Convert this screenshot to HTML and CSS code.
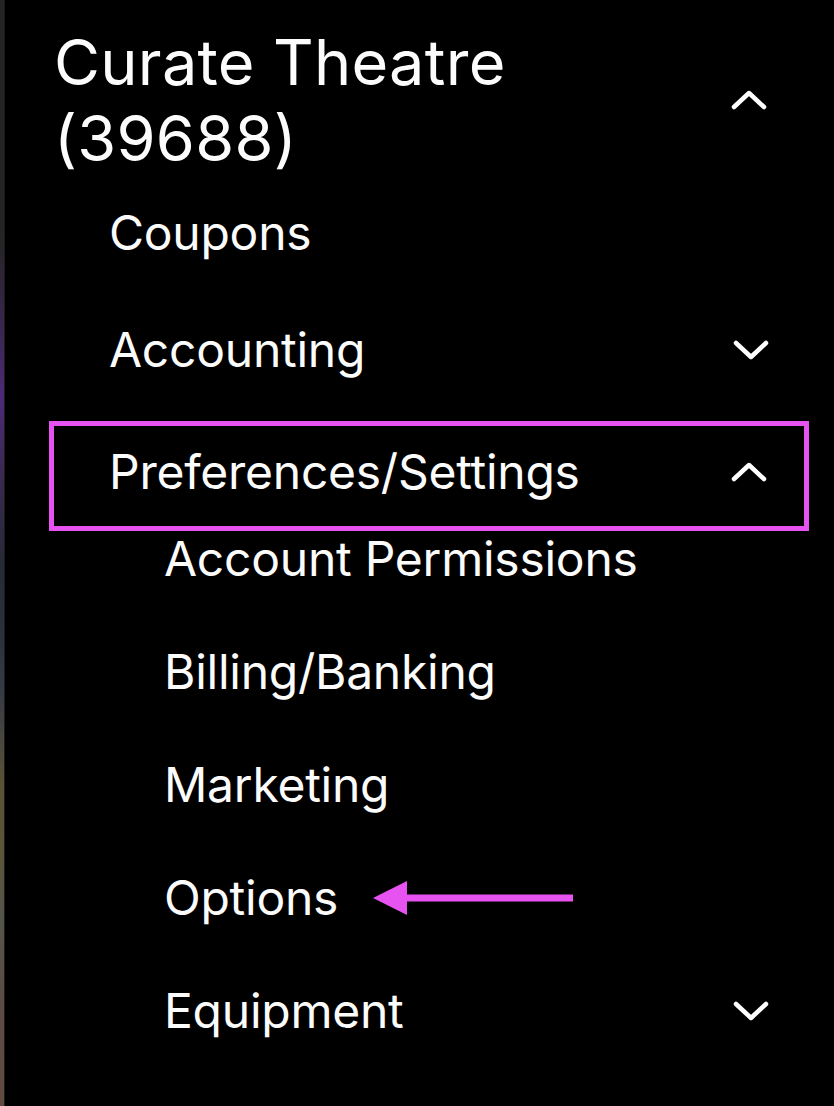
FILE: index.html
```html
<!DOCTYPE html>
<html lang="en">
<head>
  <meta charset="UTF-8">
  <meta name="viewport" content="width=device-width, initial-scale=1">
  <title>Curate Theatre - Menu</title>
  <link rel="stylesheet" href="styles.css">
</head>
<body>

  <div class="edge"></div>

  <nav class="sidebar">
    <!-- Cuenta -->
    <div class="account">
      <h1 class="account-name">Curate Theatre<br>(39688)</h1>
      <svg class="chevron" viewBox="0 0 36 20"><polyline points="3,17 18,3 33,17"/></svg>
    </div>

    <ul class="menu">
      <li class="menu-item"><a href="#">Coupons</a></li>
      <li class="menu-item">
        <a href="#">Accounting</a>
        <svg class="chevron" viewBox="0 0 36 20"><polyline points="3,3 18,17 33,3"/></svg>
      </li>
      <li class="menu-item selected">
        <a href="#">Preferences/Settings</a>
        <svg class="chevron" viewBox="0 0 36 20"><polyline points="3,17 18,3 33,17"/></svg>
      </li>
    </ul>

    <!-- Submenú de preferencias -->
    <ul class="submenu">
      <li class="submenu-item"><a href="#">Account Permissions</a></li>
      <li class="submenu-item"><a href="#">Billing/Banking</a></li>
      <li class="submenu-item"><a href="#">Marketing</a></li>
      <li class="submenu-item">
        <a href="#">Options</a>
        <svg class="pointer" viewBox="0 0 200 34">
          <polygon points="0,17 34,0 34,34"/>
          <rect x="33" y="13.5" width="167" height="7"/>
        </svg>
      </li>
      <li class="submenu-item">
        <a href="#">Equipment</a>
        <svg class="chevron" viewBox="0 0 36 20"><polyline points="3,3 18,17 33,3"/></svg>
      </li>
    </ul>
  </nav>

</body>
</html>
```

FILE: styles.css
```css
/* Reset básico */
* { margin: 0; padding: 0; box-sizing: border-box; }
body {
  font-family: Inter, "Noto Sans", sans-serif;
  background-color: #000;
  color: #fdfcfc;
  display: flex;
  min-height: 1106px;
  overflow: hidden;
}
a { color: inherit; text-decoration: none; }
ul { list-style: none; }

/* Franja de color a la izquierda */
.edge {
  width: 5px;
  flex-shrink: 0;
  border-right: 1px solid #1a1a1a;
  background: linear-gradient(to bottom,
    #242424 0%, #262426 22%, #3a2750 30%, #4d2a7a 36%, #3a2a50 43%,
    #262a36 51%, #2c323c 58%, #383c45 63%, #5a5236 71%, #5a5438 77%,
    #55554a 83%, #5a4c44 90%, #604a40 100%);
}

/* Barra lateral */
.sidebar {
  width: 760px;
  margin-left: 44px;
}

/* Cabecera de la cuenta */
.account {
  display: flex;
  align-items: center;
  justify-content: space-between;
  padding: 24px 42px 0 5px;
}
.account-name {
  font-size: 63px;
  font-weight: 400;
  line-height: 76px;
  letter-spacing: 0.3px;
}

/* Chevron */
.chevron {
  width: 36px;
  height: 20px;
  fill: none;
  stroke: #fff;
  stroke-width: 4.5;
  stroke-linecap: round;
  stroke-linejoin: round;
  flex-shrink: 0;
}

/* Menú principal */
.menu { margin-top: 29px; }
.menu-item {
  display: flex;
  align-items: center;
  justify-content: space-between;
  padding: 0 40px 0 60px;
  font-size: 48px;
  line-height: 56px;
  letter-spacing: -0.25px;
}
.menu-item + .menu-item { margin-top: 61px; }
.menu-item.selected {
  margin-top: 43px;
  border: 5px solid #e653f0;
  padding: 18px 37px 26px 55px;
}

/* Submenú */
.submenu { display: flex; flex-direction: column; gap: 57px; }
.submenu-item {
  display: flex;
  align-items: center;
  padding: 0 40px 0 115px;
  font-size: 48px;
  line-height: 56px;
  letter-spacing: -0.25px;
}
.submenu-item .chevron { margin-left: auto; }

/* Flecha indicadora */
.pointer {
  width: 200px;
  height: 34px;
  margin-left: 35px;
  fill: #e653f0;
}
```
